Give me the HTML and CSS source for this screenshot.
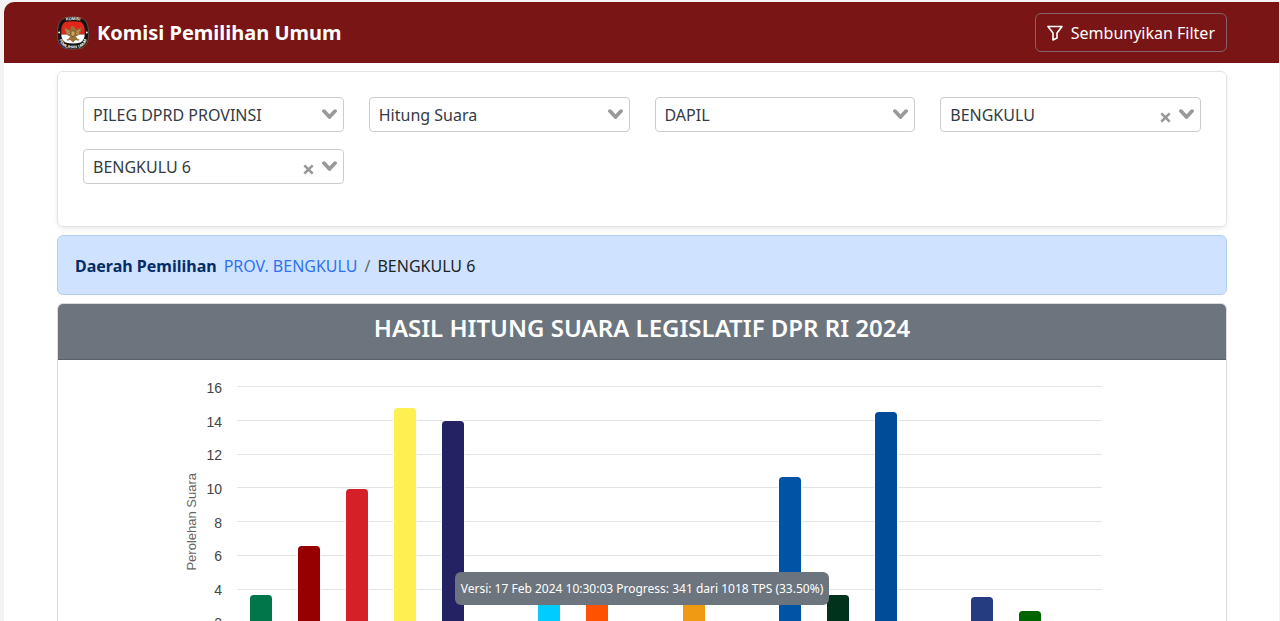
FILE: index.html
```html
<!DOCTYPE html>
<html lang="id">
<head>
<meta charset="utf-8">
<meta name="viewport" content="width=device-width, initial-scale=1">
<title>Komisi Pemilihan Umum</title>
<link rel="stylesheet" href="styles.css">
</head>
<body>
<svg class="sprite" aria-hidden="true">
  <symbol id="chevron" viewBox="0 0 14 10"><path d="M1.8 1.8 7 7.4l5.2-5.6" fill="none" stroke="currentColor" stroke-width="3.4" stroke-linecap="round" stroke-linejoin="round"/></symbol>
  <symbol id="cross" viewBox="0 0 10 10"><path d="m1.200 1.200 7.600 7.600m0-7.600L1.200 8.800" fill="none" stroke="currentColor" stroke-width="2.400"/></symbol>
</svg>
<div class="page">
  <header class="topbar">
    <a class="brand" href="#">
      <svg class="brand-logo" viewBox="0 0 32 34" aria-hidden="true">
        <defs>
          <clipPath id="shield"><path d="M8 6Q16 4.500 24 6Q28.500 9 27.700 17Q28 24 23.500 26.500Q16 28.500 8.500 26.500Q4 24 4.300 17Q3.500 9 8 6Z"/></clipPath>
          <path id="arcTop" d="M5 5.400Q16 2.600 27 5.400"/>
          <path id="arcBottom" d="M1.600 21Q3.500 29.800 9 31.400Q16 33 23 31.400Q28.500 29.800 30.600 21"/>
        </defs>
        <path d="M8 1.800Q16-.4 24 1.800Q30 4 31 11Q32.500 17 31 24Q29.500 30.500 24 32.300Q16 34.500 8 32.300Q2.500 30.500 1 24Q-.5 17 1 11Q2 4 8 1.800Z" fill="#17120f" stroke="#8d8580" stroke-width=".5"/>
        <g clip-path="url(#shield)">
          <path d="M0 0h32v18.500H0z" fill="#e1251b"/>
          <path d="M0 18.500h32V34H0z" fill="#fff"/>
        </g>
        <path d="M16 10.200c1.300 0 2 .9 1.900 2l.7 1.200c2 .1 3.800-.7 5.900-2.400.2 3-.6 5.500-2.400 7.400-1.100 1.200-2.200 1.600-3.200 1.800l1.200 2.400 2.500 1.200-1.200 1-2.700-.7L16 26.500l-2.700-2.400-2.700.7-1.200-1 2.500-1.200 1.200-2.400c-1-.2-2.100-.6-3.200-1.800C8.100 16.500 7.300 14 7.500 11c2.100 1.700 3.900 2.500 5.900 2.400l.7-1.400-1.300-.5c.8-1 1.800-1.300 3.200-1.300Z" fill="#9b7138"/>
        <path d="m9 14.200 3.500 1.900m-2.600.8 2.800.7M23 14.200l-3.500 1.900m2.600.8-2.800.7" stroke="#d8b36d" stroke-width=".8" fill="none"/>
        <path d="M14 15h4v3.500L16 21l-2-2.500z" fill="#c9a368" stroke="#604020" stroke-width=".6"/>
        <circle cx="2.200" cy="16.500" r="1" fill="#fff"/><circle cx="29.800" cy="16.500" r="1" fill="#fff"/>
        <text class="logo-text"><textPath href="#arcTop" startOffset="50%">KOMISI</textPath></text>
        <text class="logo-text"><textPath href="#arcBottom" startOffset="50%">PEMILIHAN UMUM</textPath></text>
      </svg>
      <span>Komisi Pemilihan Umum</span>
    </a>
    <button class="filter-button" type="button">
      <svg class="funnel" viewBox="0 0 16 16" aria-hidden="true"><path d="M1 1.500h14L10 8v5L6 15V8z" fill="none" stroke="currentColor" stroke-width="1.600" stroke-linejoin="round"/></svg>
      Sembunyikan Filter
    </button>
  </header>

  <main class="content">
    <form class="filters">
      <div class="field">
        <select class="select" aria-label="Jenis pemilihan"><option>PILEG DPRD PROVINSI</option></select>
        <svg class="chevron" aria-hidden="true"><use href="#chevron"/></svg>
      </div>
      <div class="field">
        <select class="select" aria-label="Tahapan"><option>Hitung Suara</option></select>
        <svg class="chevron" aria-hidden="true"><use href="#chevron"/></svg>
      </div>
      <div class="field">
        <select class="select" aria-label="Pembagian wilayah"><option>DAPIL</option></select>
        <svg class="chevron" aria-hidden="true"><use href="#chevron"/></svg>
      </div>
      <div class="field">
        <select class="select" aria-label="Provinsi"><option>BENGKULU</option></select>
        <button class="clear" type="button" aria-label="Hapus provinsi"><svg aria-hidden="true"><use href="#cross"/></svg></button>
        <svg class="chevron" aria-hidden="true"><use href="#chevron"/></svg>
      </div>
      <div class="field">
        <select class="select" aria-label="Daerah pemilihan"><option>BENGKULU 6</option></select>
        <button class="clear" type="button" aria-label="Hapus daerah pemilihan"><svg aria-hidden="true"><use href="#cross"/></svg></button>
        <svg class="chevron" aria-hidden="true"><use href="#chevron"/></svg>
      </div>
    </form>

    <nav class="region" aria-label="Daerah Pemilihan">
      <strong class="region-title">Daerah Pemilihan</strong>
      <a class="region-link" href="#">PROV. BENGKULU</a>
      <span class="region-divider">/</span>
      <span class="region-current">BENGKULU 6</span>
    </nav>

    <section class="results">
      <h1 class="results-title">HASIL HITUNG SUARA LEGISLATIF DPR RI 2024</h1>
      <div class="chart">
        <div class="axis-title">Perolehan Suara</div>
        <div class="ticks">
          <span>16</span><span>14</span><span>12</span><span>10</span><span>8</span><span>6</span><span>4</span><span>2</span><span>0</span>
        </div>
        <div class="plot">
          <div class="gridlines"><i></i><i></i><i></i><i></i><i></i><i></i><i></i><i></i><i></i></div>
          <div class="bars">
            <div class="bar" style="height:23%;background:#00764a"></div>
            <div class="bar" style="height:41%;background:#960000"></div>
            <div class="bar" style="height:62%;background:#d52027"></div>
            <div class="bar" style="height:92%;background:#ffef50"></div>
            <div class="bar" style="height:87%;background:#242262"></div>
            <div class="bar" style="height:6%;background:#8a8a8a"></div>
            <div class="bar" style="height:23%;background:#00ccff"></div>
            <div class="bar" style="height:23%;background:#ff5200"></div>
            <div class="bar" style="height:4%;background:#8a8a8a"></div>
            <div class="bar" style="height:23%;background:#f09a14"></div>
            <div class="bar" style="height:4%;background:#8a8a8a"></div>
            <div class="bar" style="height:66.500%;background:#0054a6"></div>
            <div class="bar" style="height:23%;background:#00321c"></div>
            <div class="bar" style="height:90.500%;background:#004c99"></div>
            <div class="bar" style="height:4%;background:#8a8a8a"></div>
            <div class="bar" style="height:22%;background:#263c80"></div>
            <div class="bar" style="height:17%;background:#006400"></div>
            <div class="bar" style="height:4%;background:#8a8a8a"></div>
          </div>
        </div>
      </div>
    </section>
  </main>
</div>
<div class="status" role="status"><span class="status-text">Versi: 17 Feb 2024 10:30:03 Progress: 341 dari 1018 TPS (33.50%)</span></div>
</body>
</html>
```

FILE: styles.css
```css
* { box-sizing: border-box; }

html { scrollbar-width: none; }

body {
  margin: 0;
  padding: 2px 1px 0 4px;
  background: #f3f3f3;
  color: #212529;
  font: 16px/24px "Noto Sans", "Open Sans", sans-serif;
}

.sprite { display: none; }

.page {
  background: #fff;
  border-radius: 10px 0 0 0;
  overflow: hidden;
}

.topbar {
  display: flex;
  align-items: center;
  justify-content: space-between;
  padding: 11px 52px 11px 53px;
  background: #791515;
}

.brand {
  display: flex;
  align-items: center;
  gap: 8px;
  color: #fff;
  font-size: 20px;
  font-weight: 700;
  text-decoration: none;
}

.brand-logo { width: 32px; height: 34px; }

.logo-text {
  fill: #fff;
  font: 700 4px "Liberation Sans", sans-serif;
  text-anchor: middle;
}

.filter-button {
  display: flex;
  align-items: center;
  gap: 8px;
  height: 39px;
  padding: 0 11px;
  border: 1px solid #85636a;
  border-radius: 6px;
  background: transparent;
  color: #fff;
  font: inherit;
}

.funnel { width: 16px; height: 16px; }

.content {
  display: flex;
  flex-direction: column;
  gap: 8px;
  padding: 8px 52px 24px 53px;
}

.filters {
  display: grid;
  grid-template-columns: repeat(4, 1fr);
  gap: 17px 25px;
  padding: 25px 25px 42px;
  border: 1px solid #e2e3e5;
  border-radius: 6px;
  box-shadow: 0 2px 4px rgba(0, 0, 0, .08);
}

.field { position: relative; display: flex; }

.select {
  width: 100%;
  height: 35px;
  padding: 0 60px 0 9px;
  border: 1px solid #ccc;
  border-radius: 4px;
  appearance: none;
  background: #fff;
  color: #333b44;
  font: inherit;
}

.chevron {
  position: absolute;
  top: 12px;
  right: 7px;
  width: 15px;
  height: 11px;
  color: #999;
  pointer-events: none;
}

.clear {
  position: absolute;
  top: 15px;
  right: 30px;
  display: flex;
  padding: 0;
  border: 0;
  background: none;
  color: #999;
}

.clear svg { width: 11px; height: 11px; }

.region {
  display: flex;
  gap: 7px;
  padding: 18px 17px 16px;
  border: 1px solid #b3cdf5;
  border-radius: 6px;
  background: #cfe2ff;
}

.region-title { color: #052c65; }
.region-link { color: #2f73f0; text-decoration: none; }
.region-divider { color: #5c6670; }

.results {
  border: 1px solid #d9dbdd;
  border-radius: 6px;
  overflow: hidden;
}

.results-title {
  margin: 0;
  padding: 8px 16px 16px;
  border-bottom: 1px solid #5a6067;
  background: #6c757d;
  color: #fff;
  font-size: 24px;
  line-height: 31px;
  font-weight: 600;
  text-align: center;
}

.chart {
  display: flex;
  padding: 26px 124px 40px 126px;
  font: 14px/18px "Liberation Sans", Arial, sans-serif;
}

.axis-title {
  align-self: center;
  width: 16px;
  color: #666;
  font-size: 13px;
  line-height: 16px;
  text-align: center;
  writing-mode: vertical-rl;
  transform: rotate(180deg);
}

.ticks {
  display: flex;
  flex-direction: column;
  justify-content: space-between;
  width: 22px;
  margin: -7px 15px -9px 0;
  color: #444;
  text-align: right;
}

.plot { display: grid; flex: 1; height: 271px; }

.gridlines,
.bars { grid-area: 1 / 1; }

.gridlines {
  display: flex;
  flex-direction: column;
  justify-content: space-between;
}

.gridlines i { height: 1px; background: #e4e4e4; }

.bars {
  display: grid;
  grid-template-columns: repeat(18, 1fr);
  align-items: end;
  justify-items: center;
}

.bar {
  width: 22px;
  border-radius: 3px 3px 0 0;
  outline: 1px solid rgba(255, 255, 255, .8);
}

.status {
  position: fixed;
  right: 0;
  bottom: 16px;
  left: 4px;
  display: flex;
  justify-content: center;
  pointer-events: none;
}

.status-text {
  padding: 8px 6px;
  border-radius: 6px;
  background: #6c757d;
  color: #fff;
  font-size: 12px;
  line-height: 17px;
}
```
